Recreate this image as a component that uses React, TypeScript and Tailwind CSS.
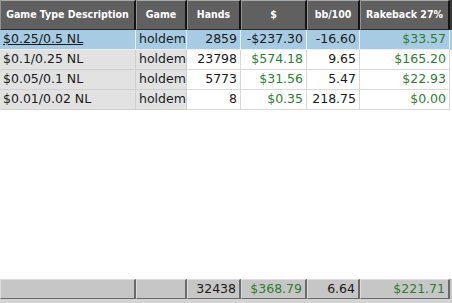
import React from "react";

const cols = "grid-cols-[136px_51px_54px_66px_53px_90px_2px]";

const rows = [
  { d: "$0.25/0.5 NL", g: "holdem", h: "2859", m: "-$237.30", mg: false, bb: "-16.60", rb: "$33.57", sel: true },
  { d: "$0.1/0.25 NL", g: "holdem", h: "23798", m: "$574.18", mg: true, bb: "9.65", rb: "$165.20", sel: false },
  { d: "$0.05/0.1 NL", g: "holdem", h: "5773", m: "$31.56", mg: true, bb: "5.47", rb: "$22.93", sel: false },
  { d: "$0.01/0.02 NL", g: "holdem", h: "8", m: "$0.35", mg: true, bb: "218.75", rb: "$0.00", sel: false },
];

function H({ children }: { children?: React.ReactNode }) {
  return (
    <div
      className="h-[30px] bg-[#606060] border-t border-l border-t-[#a8a8a8] border-l-[#949494] border-r-2 border-r-[#151515] border-b border-b-[#2a2a2a] flex items-center justify-center text-white font-bold text-[10.5px] whitespace-nowrap"
      style={{ fontFamily: '"DejaVu Sans Condensed", "DejaVu Sans", sans-serif', fontStretch: "condensed" }}
    >
      {children}
    </div>
  );
}

export default function App() {
  return (
    <div className="w-[452px] h-[303px] bg-white flex flex-col overflow-hidden" style={{ fontFamily: '"DejaVu Sans", Tahoma, sans-serif' }}>
      <div className={`grid ${cols}`}>
        <H>Game Type Description</H>
        <H>Game</H>
        <H>Hands</H>
        <H>$</H>
        <H>bb/100</H>
        <H>Rakeback 27%</H>
        <div className="h-[30px] bg-[#3a3a3a]" />
      </div>
      {rows.map((r, i) => {
        const base = r.sel ? "bg-[#a7cbe2] border-[#e8f1f7]" : "bg-white border-[#d8d8d8]";
        const gray = r.sel ? "bg-[#a7cbe2] border-[#e8f1f7]" : "bg-[#e2e2e2] border-[#d0d0d0]";
        const cell = "h-[20px] border-r border-b flex items-center text-[12.5px] whitespace-nowrap px-[3px]";
        return (
          <div key={i} className={`grid ${cols} text-[#1a1a1a]`}>
            <div className={`${cell} ${gray} ${r.sel ? "underline" : ""}`}>{r.d}</div>
            <div className={`${cell} ${gray}`}>{r.g}</div>
            <div className={`${cell} ${base} justify-end`}>{r.h}</div>
            <div className={`${cell} ${base} justify-end ${r.mg ? "text-[#2f7d2f]" : ""}`}>{r.m}</div>
            <div className={`${cell} ${base} justify-end`}>{r.bb}</div>
            <div className={`${cell} ${base} justify-end text-[#2f7d2f]`}>{r.rb}</div>
            <div className={`h-[20px] ${r.sel ? "bg-[#a7cbe2]" : "bg-white"}`} />
          </div>
        );
      })}
      <div className="flex-1" />
      <div className={`grid ${cols} text-[12.5px] text-[#1a1a1a]`}>
        {["", "", "32438", "$368.79", "6.64", "$221.71"].map((t, i) => (
          <div
            key={i}
            className={`h-[20px] bg-[#c6c6c6] border-t border-l border-t-[#dcdcdc] border-l-[#dcdcdc] border-r-2 border-r-[#6a6a6a] border-b border-b-[#6a6a6a] flex items-center justify-end px-[3px] whitespace-nowrap ${i === 3 || i === 5 ? "text-[#2f7d2f]" : ""}`}
          >
            {t}
          </div>
        ))}
        <div className="h-[20px] bg-[#c6c6c6]" />
      </div>
      <div className="h-[4px] bg-[#d4d4d4]" />
    </div>
  );
}
